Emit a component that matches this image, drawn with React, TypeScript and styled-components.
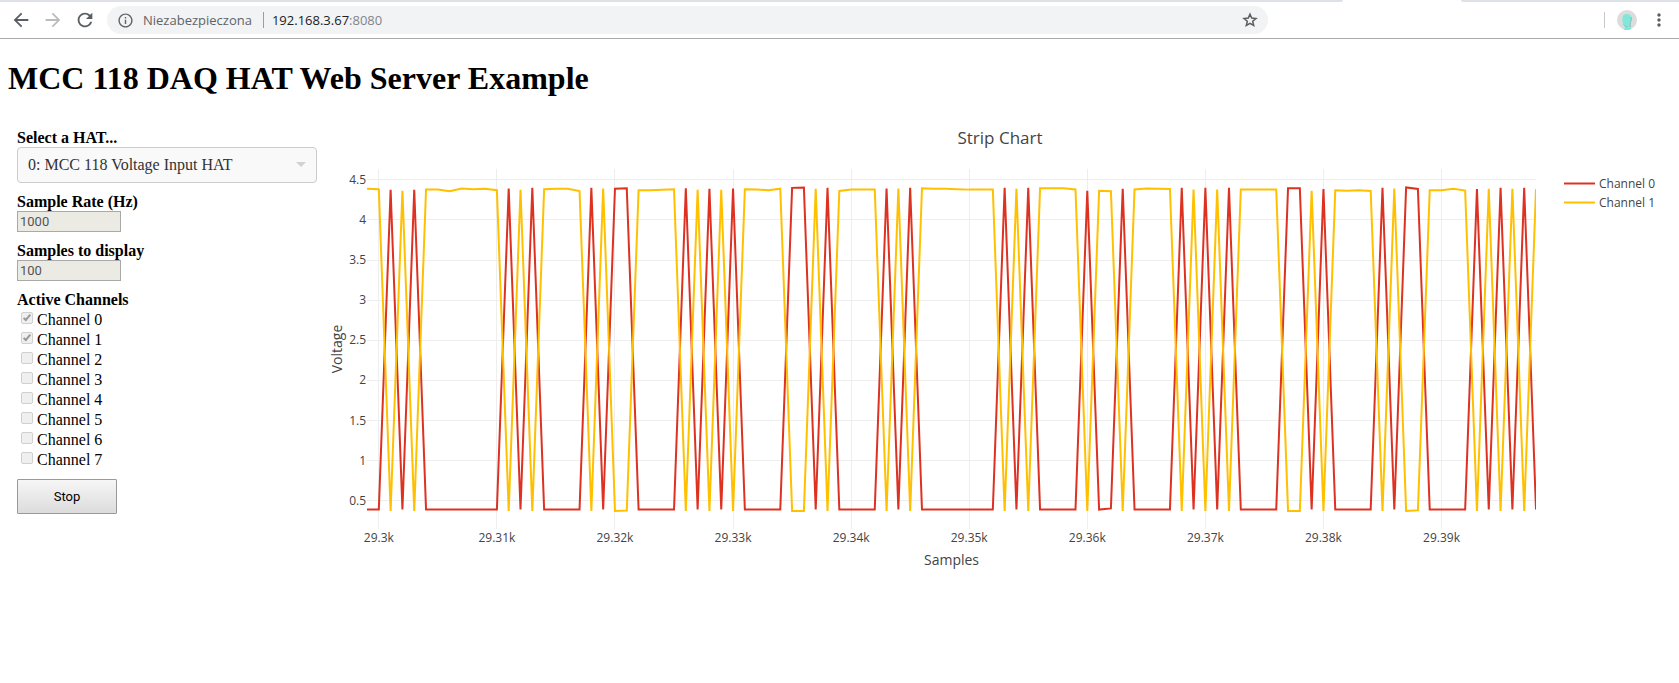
import React, { useLayoutEffect, useRef, useState } from "react";
import styled, { createGlobalStyle } from "styled-components";
import {
  MdArrowBack,
  MdArrowForward,
  MdInfoOutline,
  MdMoreVert,
  MdRefresh,
} from "react-icons/md";

const SERIF = '"Liberation Serif", "Times New Roman", serif';
const SANS = '"Open Sans", "Noto Sans", sans-serif';
const CONTROL = 'Roboto, "Liberation Sans", sans-serif';

const GlobalStyle = createGlobalStyle`
  *, *::before, *::after { box-sizing: border-box; }
  body { margin: 0; background: #fff; color: #000; font: 16px/18px ${SERIF}; }
`;

/* ---------- browser bar ---------- */

const BrowserBar = styled.header`
  border-bottom: 1px solid #a9a9a9;
  font: 13px/18px ${SANS};
`;

const TabStrip = styled.div`
  display: flex;
  height: 2px;
`;

const StripPart = styled.div<{ $last?: boolean }>`
  flex: ${(p) => (p.$last ? "0 0 218px" : "1")};
  background: #dee1e6;
  border-radius: ${(p) => (p.$last ? "0 0 0 4px" : "0 0 4px 0")};
`;

const ActiveTab = styled.div`
  flex: 0 0 118px;
`;

const Toolbar = styled.div`
  display: flex;
  align-items: center;
  height: 36px;
  padding: 0 4px 0 5px;
`;

const ToolButton = styled.button<{ $dim?: boolean }>`
  display: flex;
  align-items: center;
  justify-content: center;
  width: 32px;
  height: 28px;
  padding: 0;
  border: 0;
  background: none;
  color: ${(p) => (p.$dim ? "#babcbe" : "#5a5d61")};
`;

const AddressBar = styled.div`
  display: flex;
  flex: 1;
  align-items: center;
  height: 28px;
  margin-left: 6px;
  padding: 0 2px 0 10px;
  border-radius: 14px;
  background: #f1f3f4;
  color: #5f6368;
`;

const Security = styled.span`
  margin-left: 9px;
  padding-right: 11px;
  border-right: 1px solid #9a9da1;
  line-height: 16px;
`;

const Host = styled.span`
  flex: 1;
  margin-left: 8px;
  color: #202124;
`;

const Port = styled.span`
  color: #80868b;
`;

const BarTools = styled.div`
  display: flex;
  flex: 0 0 407px;
  align-items: center;
  justify-content: flex-end;
`;

const BarDivider = styled.span`
  width: 1px;
  height: 16px;
  margin-right: 6px;
  background: #c6c8cb;
`;

/* ---------- page ---------- */

const Page = styled.main`
  padding: 21px 4px 0 8px;
`;

const Heading = styled.h1`
  margin: 0 0 13px;
  font-size: 32px;
  line-height: 36px;
`;

const Columns = styled.div`
  display: flex;
  align-items: flex-start;
  gap: 8px;
`;

const Sidebar = styled.form`
  display: flex;
  flex: 0 0 309px;
  flex-direction: column;
  gap: 10px;
  padding: 20px 0 0 9px;
`;

const Field = styled.div`
  display: flex;
  flex-direction: column;
  align-items: flex-start;
`;

const FieldLabel = styled.label`
  font-weight: bold;
`;

const SelectBox = styled.div`
  position: relative;
  width: 100%;

  &::after {
    content: "";
    position: absolute;
    top: 15px;
    right: 11px;
    border: 5px solid transparent;
    border-top-color: #d2d2d2;
    border-bottom: 0;
    pointer-events: none;
  }
`;

const Select = styled.select`
  display: block;
  width: 100%;
  height: 36px;
  padding: 0 32px 0 10px;
  appearance: none;
  border: 1px solid #ccc;
  border-radius: 4px;
  background: #f9f9f9;
  color: #333;
  font: 16px/18px ${SERIF};
  opacity: 1;
`;

const NumberBox = styled.input`
  width: 104px;
  height: 21px;
  padding: 0 2px;
  border: 1px solid #a9a9a9;
  background: #ebebe4;
  color: #545454;
  font: 13px/18px ${CONTROL};
`;

const Channels = styled.fieldset`
  margin: 0 0 -1px;
  padding: 0;
  border: 0;
`;

const Legend = styled.legend`
  padding: 0 0 1px;
  font-weight: bold;
`;

const ChannelRow = styled.label`
  display: flex;
  gap: 4px;
  padding-left: 4px;
  line-height: 20px;
`;

const Tick = styled.input`
  position: relative;
  width: 12px;
  height: 12px;
  margin: 2px 0 0;
  appearance: none;
  border: 1px solid #d0d0d0;
  border-radius: 2px;
  background: #efefef;

  &:checked::after {
    content: "";
    position: absolute;
    top: 0;
    left: 3px;
    width: 4px;
    height: 8px;
    border: solid #999;
    border-width: 0 2px 2px 0;
    transform: rotate(40deg);
  }
`;

const StopButton = styled.button`
  width: 100px;
  height: 35px;
  border: 1px solid #999;
  border-radius: 1px;
  background: linear-gradient(#f6f6f6, #dcdcdc);
  color: #000;
  font: 13px/18px ${CONTROL};
`;

const ChartBox = styled.section`
  flex: 1;
  min-width: 0;
`;

const ChartSvg = styled.svg`
  display: block;
  font-family: ${SANS};
  font-size: 12px;
  fill: #444;
`;

/* ---------- data ---------- */

const CHANNELS = [0, 1, 2, 3, 4, 5, 6, 7];
const FIRST = 29299;
const COUNT = 100;

type Reading = [offset: number, volts: number];

/* Samples at which a channel is high; between them it rests at its low level. */
const HIGH_0: Reading[] = [
  [1, 4.375], [3, 4.375], [11, 4.392], [13, 4.4], [18, 4.4], [20, 4.388], [21, 4.394],
  [26, 4.396], [28, 4.388], [30, 4.392], [35, 4.4], [36, 4.405], [38, 4.4], [43, 4.392],
  [45, 4.4], [53, 4.4], [55, 4.4], [60, 4.365], [63, 4.388], [68, 4.4], [70, 4.4],
  [72, 4.4], [77, 4.396], [78, 4.396], [80, 4.384], [85, 4.4], [87, 4.405], [88, 4.386],
  [93, 4.384], [95, 4.4], [97, 4.4],
];

const HIGH_1: Reading[] = [
  [-1, 4.388], [0, 4.384], [2, 4.365], [4, 4.379], [5, 4.379], [6, 4.357], [7, 4.392],
  [8, 4.382], [9, 4.388], [10, 4.371], [12, 4.375], [14, 4.384], [15, 4.388], [16, 4.388],
  [17, 4.361], [19, 4.392], [22, 4.37], [23, 4.37], [24, 4.376], [25, 4.382], [27, 4.375],
  [29, 4.375], [31, 4.382], [32, 4.38], [33, 4.371], [34, 4.39], [37, 4.388], [39, 4.361],
  [40, 4.38], [41, 4.38], [42, 4.379], [44, 4.392], [46, 4.394], [47, 4.39], [48, 4.388],
  [49, 4.384], [50, 4.378], [51, 4.378], [52, 4.38], [54, 4.388], [56, 4.394], [57, 4.394],
  [58, 4.394], [59, 4.38], [61, 4.363], [62, 4.359], [64, 4.38], [65, 4.392], [66, 4.388],
  [67, 4.386], [69, 4.378], [71, 4.378], [73, 4.38], [74, 4.378], [75, 4.38], [76, 4.38],
  [79, 4.363], [81, 4.369], [82, 4.365], [83, 4.37], [84, 4.361], [86, 4.392], [89, 4.37],
  [90, 4.37], [91, 4.388], [92, 4.367], [94, 4.388], [96, 4.388], [98, 4.384],
];

const LOW_0: Reading[] = [[62, 0.405]];
const LOW_1: Reading[] = [[88, 0.382], [21, 0.378]];

function series(base: number, ...readings: Reading[][]): number[] {
  const values = new Array<number>(COUNT).fill(base);
  readings.flat().forEach(([offset, volts]) => {
    values[offset + 1] = volts;
  });
  return values;
}

const TRACES = [
  { name: "Channel 0", color: "#dd3222", values: series(0.391, HIGH_0, LOW_0) },
  { name: "Channel 1", color: "#ffc000", values: series(0.374, HIGH_1, LOW_1) },
];

const X_TICKS = [29300, 29310, 29320, 29330, 29340, 29350, 29360, 29370, 29380, 29390];
const Y_TICKS = [0.5, 1, 1.5, 2, 2.5, 3, 3.5, 4, 4.5];

/* ---------- chart ---------- */

const PLOT = { left: 42, right: 139, top: 60, height: 360 };
const Y_TOP = 4.635;
const Y_SCALE = 80.25;

function StripChart() {
  const box = useRef<HTMLElement>(null);
  const [width, setWidth] = useState(1350);

  useLayoutEffect(() => {
    const node = box.current;
    if (!node) return;
    const measure = () => setWidth(node.clientWidth);
    measure();
    const observer = new ResizeObserver(measure);
    observer.observe(node);
    return () => observer.disconnect();
  }, []);

  const plotWidth = Math.max(width - PLOT.left - PLOT.right, 10);
  const plotRight = PLOT.left + plotWidth;
  const bottom = PLOT.top + PLOT.height;
  const x = (sample: number) => PLOT.left + ((sample - FIRST) * plotWidth) / (COUNT - 1);
  const y = (volts: number) => PLOT.top + (Y_TOP - volts) * Y_SCALE;

  return (
    <ChartBox ref={box}>
      <ChartSvg width={width} height={470} role="img" aria-label="Strip Chart">
        <defs>
          <clipPath id="plot-area">
            <rect x={PLOT.left} y={PLOT.top} width={plotWidth} height={PLOT.height} />
          </clipPath>
        </defs>

        <g stroke="#eee" shapeRendering="crispEdges">
          {X_TICKS.map((t) => (
            <line key={t} x1={x(t)} x2={x(t)} y1={PLOT.top} y2={bottom} />
          ))}
          {Y_TICKS.map((t) => (
            <line key={t} x1={PLOT.left} x2={plotRight} y1={y(t)} y2={y(t)} />
          ))}
        </g>

        <g clipPath="url(#plot-area)" fill="none" strokeWidth={2} strokeMiterlimit={2}>
          {TRACES.map((trace) => (
            <polyline
              key={trace.name}
              stroke={trace.color}
              points={trace.values.map((v, i) => `${x(FIRST + i)},${y(v)}`).join(" ")}
            />
          ))}
        </g>

        <text x={width / 2} y={35} textAnchor="middle" fontSize={17}>
          Strip Chart
        </text>
        {X_TICKS.map((t) => (
          <text key={t} x={x(t)} y={433} textAnchor="middle">
            {t / 1000}k
          </text>
        ))}
        {Y_TICKS.map((t) => (
          <text key={t} x={PLOT.left - 1} y={y(t) + 4} textAnchor="end">
            {t}
          </text>
        ))}
        <text x={PLOT.left + plotWidth / 2} y={456} textAnchor="middle" fontSize={14}>
          Samples
        </text>
        <text
          transform={`translate(17 ${PLOT.top + PLOT.height / 2}) rotate(-90)`}
          textAnchor="middle"
          fontSize={14}
        >
          Voltage
        </text>

        {TRACES.map((trace, i) => (
          <g key={trace.name} transform={`translate(${plotRight + 28} ${74 + i * 19})`}>
            <line x2={31} y1={0.5} y2={0.5} stroke={trace.color} strokeWidth={2} />
            <text x={35} y={5}>
              {trace.name}
            </text>
          </g>
        ))}
      </ChartSvg>
    </ChartBox>
  );
}

function StarIcon() {
  return (
    <svg width="16" height="16" viewBox="0 0 16 16" aria-hidden="true">
      <path
        d="M8 2.200 9.700 6.100 14 6.500 10.700 9.300 11.700 13.500 8 11.300 4.300 13.500 5.300 9.300 2 6.500 6.300 6.100z"
        fill="none"
        stroke="currentColor"
        strokeWidth="1.500"
      />
    </svg>
  );
}

function Avatar() {
  return (
    <svg width="20" height="20" viewBox="0 0 20 20" aria-hidden="true">
      <circle cx="10" cy="10" r="10" fill="#dcdcdc" />
      <path
        d="M5.500 8C5.500 5.200 7.400 4 10 4s4.600 1.500 4.600 4.300c0 2.800-1.300 4.500-1.300 6.700 0 1.800.4 3 .8 4-2 1.200-5.600 1.300-7.600.4.300-1.200 2.300-1.300 2.600-3.200C6.800 16 5.500 13.500 5.500 11z"
        fill="#7fe8da"
      />
      <path
        d="M14.300 7c.3 2.500-.3 4-.9 5.600-.4 1.300-.3 2.600 0 4.400M6.300 14.500c.7 1.200 1.600 1.700 3 1.600v1.400"
        fill="none"
        stroke="#8fb0ac"
        strokeWidth="0.800"
      />
    </svg>
  );
}

export default function App() {
  return (
    <>
      <GlobalStyle />
      <BrowserBar>
        <TabStrip>
          <StripPart />
          <ActiveTab />
          <StripPart $last />
        </TabStrip>
        <Toolbar>
          <ToolButton type="button" aria-label="Back">
            <MdArrowBack size={22} />
          </ToolButton>
          <ToolButton type="button" aria-label="Forward" $dim>
            <MdArrowForward size={22} />
          </ToolButton>
          <ToolButton type="button" aria-label="Reload">
            <MdRefresh size={22} />
          </ToolButton>
          <AddressBar>
            <MdInfoOutline size={17} />
            <Security>Niezabezpieczona</Security>
            <Host>
              192.168.3.67<Port>:8080</Port>
            </Host>
            <ToolButton type="button" aria-label="Bookmark">
              <StarIcon />
            </ToolButton>
          </AddressBar>
          <BarTools>
            <BarDivider />
            <ToolButton type="button" aria-label="Profile">
              <Avatar />
            </ToolButton>
            <ToolButton type="button" aria-label="Menu">
              <MdMoreVert size={20} />
            </ToolButton>
          </BarTools>
        </Toolbar>
      </BrowserBar>

      <Page>
        <Heading>MCC 118 DAQ HAT Web Server Example</Heading>
        <Columns>
          <Sidebar>
            <Field>
              <FieldLabel htmlFor="hat">Select a HAT...</FieldLabel>
              <SelectBox>
                <Select id="hat" disabled>
                  <option>0: MCC 118 Voltage Input HAT</option>
                </Select>
              </SelectBox>
            </Field>
            <Field>
              <FieldLabel htmlFor="rate">Sample Rate (Hz)</FieldLabel>
              <NumberBox id="rate" defaultValue="1000" disabled />
            </Field>
            <Field>
              <FieldLabel htmlFor="samples">Samples to display</FieldLabel>
              <NumberBox id="samples" defaultValue="100" disabled />
            </Field>
            <Channels>
              <Legend>Active Channels</Legend>
              {CHANNELS.map((n) => (
                <ChannelRow key={n}>
                  <Tick type="checkbox" defaultChecked={n < 2} disabled />
                  Channel {n}
                </ChannelRow>
              ))}
            </Channels>
            <StopButton type="button">Stop</StopButton>
          </Sidebar>
          <StripChart />
        </Columns>
      </Page>
    </>
  );
}
